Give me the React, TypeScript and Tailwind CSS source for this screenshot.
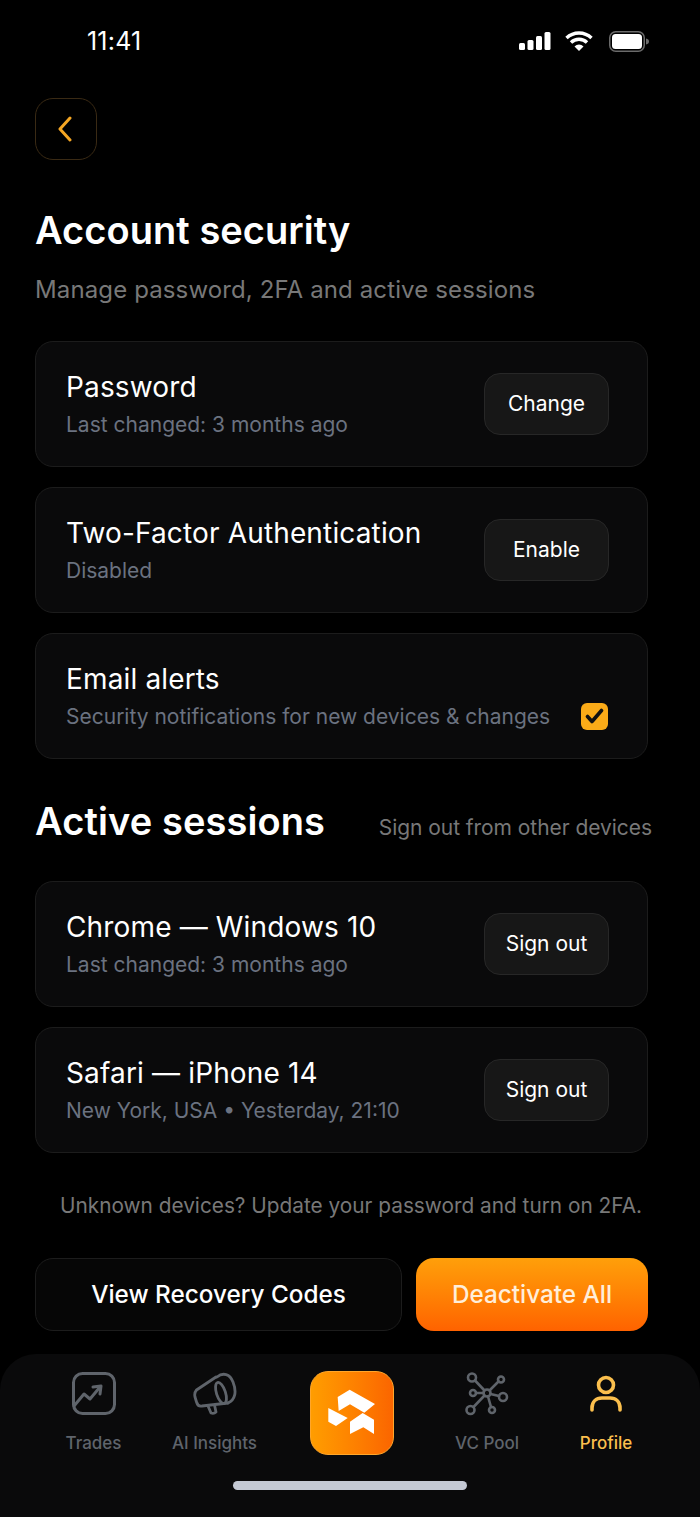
import React from "react";

const font = { fontFamily: "Inter, sans-serif" };

function Card({ title, sub, action }: { title: string; sub: string; action: React.ReactNode }) {
  return (
    <div className="flex h-[126px] items-center justify-between rounded-[18px] border border-[#1c1c1c] bg-[#0a0a0b] pl-[30px] pr-[38px]">
      <div className="flex flex-col pt-[1px]">
        <div className="text-[28px] leading-[36px] font-normal tracking-[0.15px] text-white">{title}</div>
        <div className="mt-[5px] text-[21px] leading-[30px] text-[#6b7280]">{sub}</div>
      </div>
      {action}
    </div>
  );
}

function Btn({ label }: { label: string }) {
  return (
    <button className="flex h-[62px] w-[125px] items-center justify-center rounded-[16px] border border-[#272727] bg-[#171717] text-[21px] text-white">
      {label}
    </button>
  );
}

function NavItem({ label, icon, active, w }: { label: string; icon: React.ReactNode; active?: boolean; w: string }) {
  return (
    <div className={`flex flex-col items-center ${w}`}>
      <div className="flex h-[45px] items-center justify-center">{icon}</div>
      <div className={`mt-[15px] whitespace-nowrap text-[17px] leading-[24px] font-medium ${active ? "text-[#fbbf4d]" : "text-[#5f646b]"}`}>
        {label}
      </div>
    </div>
  );
}

export default function App() {
  return (
    <div className="flex h-[1517px] w-[700px] flex-col overflow-hidden bg-black text-white" style={font}>
      <div className="flex h-[82px] shrink-0 items-center justify-between pl-[87px] pr-[50px]">
        <span className="mt-[2px] text-[25px] font-normal tracking-[0.2px] text-white">11:41</span>
        <div className="flex items-center gap-[14px]">
          <svg width="32" height="18" viewBox="0 0 32 18" fill="#fff">
            <rect x="0" y="11" width="6" height="7" rx="1.5" />
            <rect x="8.500" y="8" width="6" height="10" rx="1.5" />
            <rect x="17" y="4" width="6" height="14" rx="1.5" />
            <rect x="25.500" y="0" width="6" height="18" rx="1.5" />
          </svg>
          <svg width="28" height="20" viewBox="0 0 28 20" fill="none" stroke="#fff" strokeWidth="3.400">
            <path d="M1.500 7a18 18 0 0 1 25 0" />
            <path d="M6 11.500a11.500 11.500 0 0 1 16 0" />
            <path d="M14 20l-4.500-4.500a6.300 6.300 0 0 1 9 0z" fill="#fff" stroke="none" />
          </svg>
          <svg width="41" height="21" viewBox="0 0 41 21" fill="none" className="ml-[2px]">
            <rect x="0.750" y="0.750" width="34.500" height="19.500" rx="6" stroke="#6b6b6b" strokeWidth="1.500" />
            <rect x="3" y="3" width="30" height="15" rx="3.500" fill="#fff" />
            <path d="M37 7.500c2 .4 3 1.500 3 3s-1 2.600-3 3z" fill="#6b6b6b" />
          </svg>
        </div>
      </div>

      <div className="flex shrink-0 flex-col pl-[35px] pr-[52px]">
        <button className="mt-[16px] flex h-[62px] w-[62px] items-center justify-center rounded-[18px] border border-[#3a2a14]">
          <svg width="16" height="26" viewBox="0 0 16 26" fill="none" stroke="#f5a623" strokeWidth="3" strokeLinecap="round" strokeLinejoin="round" className="mr-[3px]">
            <path d="M13 2L3 13l10 11" />
          </svg>
        </button>

        <h1 className="mt-[45px] text-[38px] leading-[50px] font-semibold tracking-[0.05px] text-white">Account security</h1>
        <p className="mt-[17px] text-[24px] leading-[36px] tracking-[0.125px] whitespace-nowrap text-[#787878]">Manage password, 2FA and active sessions</p>

        <div className="mt-[33px] flex flex-col gap-[20px]">
          <Card title="Password" sub="Last changed: 3 months ago" action={<Btn label="Change" />} />
          <Card title="Two-Factor Authentication" sub="Disabled" action={<Btn label="Enable" />} />
          <div className="flex h-[126px] items-center justify-between rounded-[18px] border border-[#1c1c1c] bg-[#0a0a0b] pl-[30px] pr-[39px]">
            <div className="flex flex-col pt-[1px]">
              <div className="text-[28px] leading-[36px] tracking-[0.15px] text-white">Email alerts</div>
              <div className="mt-[5px] text-[21px] leading-[30px] text-[#6b7280]">Security notifications for new devices &amp; changes</div>
            </div>
            <div className="mt-[40px] flex h-[27px] w-[27px] items-center justify-center rounded-[6px] bg-[#fbab18]">
              <svg width="19" height="16" viewBox="0 0 19 16" fill="none" stroke="#111" strokeWidth="3.600" strokeLinecap="round" strokeLinejoin="round">
                <path d="M2.500 8.500l4.500 5 9.500-11" />
              </svg>
            </div>
          </div>
        </div>

        <div className="mt-[37px] flex items-center justify-between">
          <h2 className="text-[38px] leading-[50px] font-semibold tracking-[0.1px] text-white">Active sessions</h2>
          <span className="mr-[-4px] mt-[13px] whitespace-nowrap text-[21px] tracking-[-0.05px] text-[#787878]">Sign out from other devices</span>
        </div>

        <div className="mt-[35px] flex flex-col gap-[20px]">
          <Card title="Chrome — Windows 10" sub="Last changed: 3 months ago" action={<Btn label="Sign out" />} />
          <Card title="Safari — iPhone 14" sub="New York, USA • Yesterday, 21:10" action={<Btn label="Sign out" />} />
        </div>

        <p className="mr-[-19px] mt-[38px] whitespace-nowrap text-center text-[20.8px] leading-[30px] text-[#787878]">Unknown devices? Update your password and turn on 2FA.</p>

        <div className="mt-[37px] flex gap-[14px]">
          <button className="flex h-[73px] w-[367px] items-center justify-center rounded-[18px] border border-[#1c1c1c] bg-[#060606] text-[24.3px] font-medium text-white">
            View Recovery Codes
          </button>
          <button className="flex h-[73px] w-[232px] items-center justify-center rounded-[18px] bg-gradient-to-b from-[#ff9f0a] to-[#ff6200] text-[24.3px] font-medium text-[#ffeeda]">
            Deactivate All
          </button>
        </div>
      </div>

      <div className="mt-[23px] flex h-[164px] shrink-0 flex-col rounded-t-[36px] bg-[#0a0a0b]">
        <div className="flex items-start pl-[33px] pt-[17px]">
          <NavItem w="w-[121px]" label="Trades" icon={
            <svg width="44" height="43" viewBox="0 0 44 43" fill="none" stroke="#5f646b" strokeWidth="3" strokeLinecap="round" strokeLinejoin="round">
              <rect x="1.500" y="1.500" width="41" height="40" rx="9" />
              <path d="M2 34l10-12 6 5 10-12" />
              <path d="M21 15l8-1-1 8" />
            </svg>
          } />
          <NavItem w="w-[121px]" label="AI Insights" icon={
            <svg width="44" height="44" viewBox="0 0 44 44" fill="none" stroke="#5f646b" strokeWidth="2.800" strokeLinecap="round" strokeLinejoin="round">
              <ellipse cx="28" cy="21" rx="4.500" ry="11" transform="rotate(-18 28 21)" />
              <path d="M23 5L3.500 18Q1 21 2 25l1.500 5Q5 35 9 34l26-3" />
              <path d="M24 5c6-5 13-3 16 5 4 10 2 18-5 21" />
              <path d="M15 34l3 7q3 1 5-1l-1.500-7" />
            </svg>
          } />
          <div className="ml-[35px] flex h-[84px] w-[84px] items-center justify-center rounded-[18px] border border-[#ffa62b] bg-gradient-to-r from-[#ff9d00] to-[#fb6500]">
            <svg width="52" height="50" viewBox="78 70 156 150" fill="#fff">
              <path d="M113 97L149 75L225 118L193 144L150 119L116 139z" />
              <path d="M85 130L143 160L108 184L85 171z" />
              <path d="M150 171L188 145L222 165V208L190 188L150 208z" />
            </svg>
          </div>
          <NavItem w="w-[120px] ml-[33px]" label="VC Pool" icon={
            <svg width="44" height="44" viewBox="0 0 44 44" fill="none" stroke="#5f646b" strokeWidth="2.600" strokeLinecap="round">
              <circle cx="22" cy="21" r="3.500" />
              <circle cx="7" cy="5.500" r="4" />
              <circle cx="36" cy="7.500" r="3" />
              <circle cx="38" cy="25" r="4" />
              <circle cx="27" cy="38" r="3" />
              <circle cx="5.500" cy="38" r="4" />
              <circle cx="8" cy="21" r="3" />
              <path d="M10 8.500l9.500 10M24.500 18.500L33.500 9.500M25.500 22l8.500 2M23 24.500l3 10.500M19.500 23.500L8.500 35M11 21h7.500" />
            </svg>
          } />
          <NavItem w="w-[118px]" active label="Profile" icon={
            <svg width="34" height="38" viewBox="0 0 34 38" fill="none" stroke="#fbbf4d" strokeWidth="3.600" strokeLinecap="round">
              <circle cx="17" cy="10" r="7.500" />
              <path d="M3 35v-2c0-6 4-10 10-10h8c6 0 10 4 10 10v2" />
            </svg>
          } />
        </div>
        <div className="mx-auto mt-[26px] h-[9px] w-[234px] rounded-full bg-[#c4c9d4]" />
      </div>
    </div>
  );
}
